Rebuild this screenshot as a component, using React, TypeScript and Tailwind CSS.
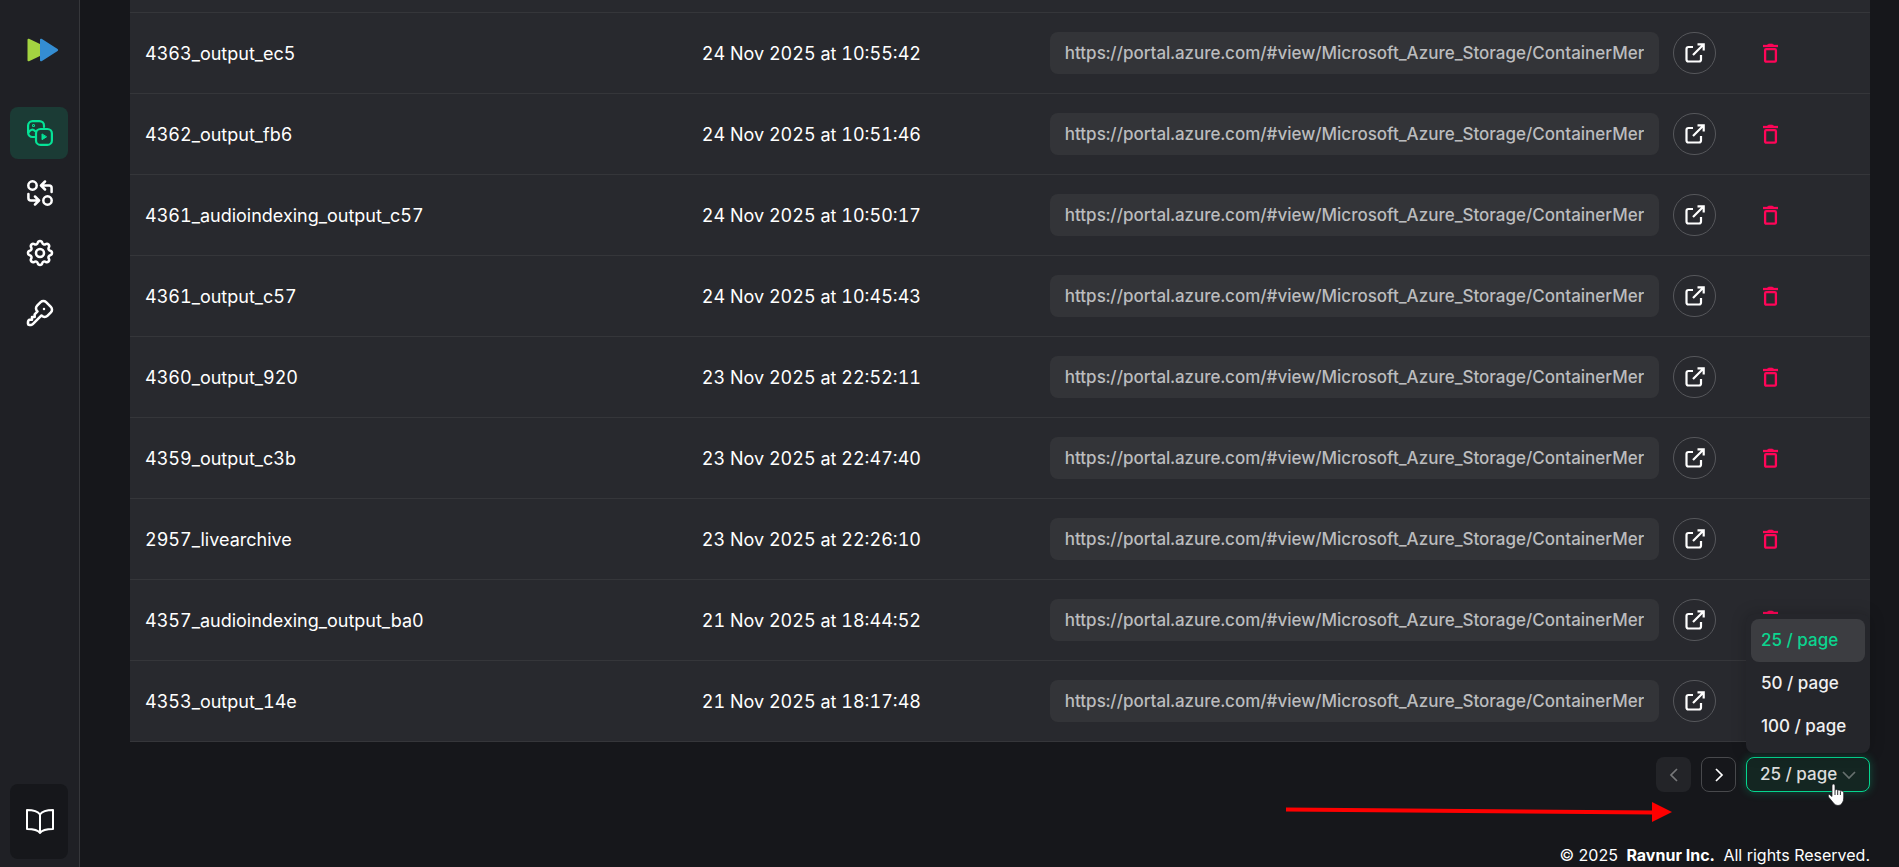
import React, { useState } from 'react';
import { TbKey, TbSettings } from 'react-icons/tb';

interface Asset {
    name: string;
    created: string;
}

const STORAGE_URL = 'https://portal.azure.com/#view/Microsoft_Azure_Storage/ContainerMer';

const ASSETS: Asset[] = [
    { name: '4363_output_ec5', created: '24 Nov 2025 at 10:55:42' },
    { name: '4362_output_fb6', created: '24 Nov 2025 at 10:51:46' },
    { name: '4361_audioindexing_output_c57', created: '24 Nov 2025 at 10:50:17' },
    { name: '4361_output_c57', created: '24 Nov 2025 at 10:45:43' },
    { name: '4360_output_920', created: '23 Nov 2025 at 22:52:11' },
    { name: '4359_output_c3b', created: '23 Nov 2025 at 22:47:40' },
    { name: '2957_livearchive', created: '23 Nov 2025 at 22:26:10' },
    { name: '4357_audioindexing_output_ba0', created: '21 Nov 2025 at 18:44:52' },
    { name: '4353_output_14e', created: '21 Nov 2025 at 18:17:48' },
];

const PAGE_SIZES = [25, 50, 100];

const Logo = () => (
    <svg width="32" height="24" viewBox="0 0 32 24" aria-hidden="true">
        <path d="M2 .8 14 6.500v11L2 23.200Q.5 23.600.5 22.200V1.800Q.5.4 2 .8z" fill="#a3d441" />
        <path d="M14.600.8 30.600 11q1.200 1 0 2L14.600 23.200q-1.600.6-1.600-1V1.800q0-1.600 1.600-1z" fill="#348dd2" />
    </svg>
);

const AssetsIcon = () => (
    <svg width="26" height="26" viewBox="0 0 26 26" fill="none" stroke="currentColor" strokeWidth="2.200" strokeLinecap="round" strokeLinejoin="round" aria-hidden="true">
        <path d="M7.500 17H5.500A4.500 4.500 0 0 1 1.100 12.500V5.500A4.500 4.500 0 0 1 5.500 1.100h7A4.500 4.500 0 0 1 17 5.500V7" />
        <path d="M1.500 12.500c2-3.300 4.500-3.600 6.500-1.500" />
        <circle cx="6.500" cy="5.500" r=".5" />
        <rect x="9" y="9" width="15.900" height="15.900" rx="4.500" />
        <path d="M15 14.300v5.400l4.300-2.700z" fill="currentColor" strokeWidth="1" />
    </svg>
);

const JobsIcon = () => (
    <svg width="26" height="26" viewBox="0 0 26 26" fill="none" stroke="currentColor" strokeWidth="2.500" strokeLinecap="round" strokeLinejoin="round" aria-hidden="true">
        <circle cx="5.500" cy="5.500" r="4.200" />
        <circle cx="20.500" cy="20.500" r="4.200" />
        <path d="M24.600 12V8q0-2.500-2.500-2.500H14.500M18 1.500l-4 4 4 4" />
        <path d="M1.400 14v4q0 2.500 2.500 2.500H11.500M8 16.500l4 4-4 4" />
    </svg>
);

const BookIcon = () => (
    <svg width="28" height="25" viewBox="0 0 28 25" fill="none" stroke="currentColor" strokeWidth="2" strokeLinejoin="round" aria-hidden="true">
        <path d="M14 5.500C12 2.500 7.500 1 1 1v19c6.500 0 11 1 13 4 2-3 6.500-4 13-4V1C20.500 1 16 2.500 14 5.500zM14 5.500V24" />
    </svg>
);

const OpenIcon = () => (
    <svg width="20" height="20" viewBox="0 0 20 20" fill="none" stroke="currentColor" strokeWidth="2.200" aria-hidden="true">
        <path d="M8 4H3.500Q1.500 4 1.500 6v10.500q0 2 2 2H14q2 0 2-2V12" />
        <path d="M8 12 18.500 1.500M12.500 1.300h6.200v6.200" />
    </svg>
);

const TrashIcon = () => (
    <svg width="15" height="20" viewBox="0 0 15 20" fill="none" stroke="currentColor" strokeWidth="2.300" aria-hidden="true">
        <path d="M0 3h15" />
        <path d="M4.500 2 5.500 1h4l1 1z" fill="currentColor" strokeWidth=".6" />
        <rect x="2.100" y="6.200" width="10.800" height="12.500" rx="1" />
    </svg>
);

const Chevron = ({ d, className }: { d: string; className?: string }) => (
    <svg width="14" height="14" viewBox="0 0 14 14" fill="none" stroke="currentColor" strokeWidth="1.700" className={className} aria-hidden="true">
        <path d={d} />
    </svg>
);

const NAV_ITEMS = [
    { label: 'Assets', icon: <AssetsIcon />, active: true },
    { label: 'Jobs', icon: <JobsIcon />, active: false },
    { label: 'Settings', icon: <TbSettings size={32} strokeWidth={1.9} />, active: false },
    { label: 'Keys', icon: <TbKey size={32} strokeWidth={1.9} />, active: false },
];

const Sidebar = () => (
    <aside className="flex w-20 shrink-0 flex-col items-start border-r border-[#36373b] bg-[#1f2025] pt-[38px] pb-2 pl-2.5">
        <a href="#home" aria-label="Home" className="pl-[17px]">
            <Logo />
        </a>
        <nav className="mt-[45px] flex flex-col gap-2">
            {NAV_ITEMS.map(item => (
                <a
                    key={item.label}
                    href={`#${item.label.toLowerCase()}`}
                    aria-label={item.label}
                    className={`flex h-13 w-[58px] items-center justify-center rounded-lg pl-0.5 ${item.active ? 'bg-[#1b3b35] text-[#05e397]' : 'text-white'}`}
                >
                    {item.icon}
                </a>
            ))}
        </nav>
        <a href="#docs" aria-label="Documentation" className="mt-auto flex h-[75px] w-[58px] items-center justify-center rounded-lg bg-[#16171b] pl-0.5 text-white">
            <BookIcon />
        </a>
    </aside>
);

const AssetRow = ({ asset }: { asset: Asset }) => (
    <tr className="h-[81px] border-t border-[#35363a]">
        <td className="px-[15px] pt-0.5">{asset.name}</td>
        <td className="px-[15px] pt-0.5">{asset.created}</td>
        <td className="pr-4 pl-[15px]">
            <div className="flex items-center gap-3.5">
                <input
                    readOnly
                    value={STORAGE_URL}
                    aria-label={`Storage URL of ${asset.name}`}
                    className="h-[42px] min-w-0 flex-1 rounded-lg bg-[#333438] px-[15px] text-[17px] font-medium text-[#bbbcbe] outline-none"
                />
                <button aria-label={`Open ${asset.name}`} className="flex h-[42px] w-[43px] items-center justify-center rounded-full border border-[#56575b]">
                    <OpenIcon />
                </button>
            </div>
        </td>
        <td className="px-4">
            <button aria-label={`Delete ${asset.name}`} className="flex h-10 w-11 items-center justify-center text-[#ff0558]">
                <TrashIcon />
            </button>
        </td>
    </tr>
);

const PageSizeSelect = () => {
    const [pageSize, setPageSize] = useState(25);

    return (
        <div className="relative text-[17px] font-medium">
            <select
                value={pageSize}
                onChange={e => setPageSize(Number(e.target.value))}
                aria-label="Page size"
                className="block h-[35px] w-31 appearance-none rounded-lg border border-[#05d68f] bg-[#142622] pl-[13px] text-[#dcdddd] shadow-[0_0_10px_rgba(5,214,143,0.3)] outline-none"
            >
                {PAGE_SIZES.map(size => (
                    <option key={size} value={size}>{size} / page</option>
                ))}
            </select>
            <Chevron d="M1 4l6 6 6-6" className="pointer-events-none absolute top-[11px] right-3.5 text-[#66706e]" />

            <div role="listbox" aria-label="Page size" className="absolute right-0 bottom-[39px] w-31 rounded-lg bg-[#25262b] p-[5px] shadow-[0_0_16px_rgba(0,0,0,0.2)]">
                {PAGE_SIZES.map(size => (
                    <button
                        key={size}
                        role="option"
                        aria-selected={size === pageSize}
                        onClick={() => setPageSize(size)}
                        className={`block h-[43px] w-full rounded-lg pl-2.5 text-left ${size === pageSize ? 'bg-[#3c3d41] text-[#0bd58f]' : 'text-[#f0f0f1]'}`}
                    >
                        {size} / page
                    </button>
                ))}
            </div>

            {/* Hand pointer over the open select */}
            <svg width="18" height="24" viewBox="0 0 18 24" className="pointer-events-none absolute top-[26px] right-[25px]" aria-hidden="true">
                <path
                    d="M5 2Q6.500 0 8 2v5q1.500-1 2.700.300 1.500-1 2.600.500 3-.500 3.400 1.900V15q0 3-1.500 5Q14 22.500 11 22.500T6.500 20L1.500 14Q.5 12 2.500 11.500L5 13.500z"
                    fill="#fff"
                    stroke="#17181c"
                    strokeWidth=".7"
                />
                <path d="M8 7v5M10.700 7.500V12M13.400 8.500v3.500" stroke="#17181c" strokeWidth=".9" />
            </svg>
        </div>
    );
};

export default function App() {
    return (
        <div className="flex min-h-screen bg-[#16171b] font-['Inter','Liberation_Sans',sans-serif] text-white">
            <Sidebar />
            <main className="flex min-w-0 flex-1 flex-col pr-[29px] pl-[50px]">
                <div className="bg-[#28292e] pt-3">
                    <table className="w-full table-fixed border-collapse border-b border-[#35363a] text-lg tabular-nums">
                        <colgroup>
                            <col className="w-[32%]" />
                            <col className="w-[20%]" />
                            <col />
                            <col className="w-[138px]" />
                        </colgroup>
                        <tbody>
                            {ASSETS.map(asset => (
                                <AssetRow key={asset.name} asset={asset} />
                            ))}
                        </tbody>
                    </table>
                </div>

                <div className="mt-[15px] flex justify-end gap-2.5">
                    <button disabled aria-label="Previous page" className="flex size-[35px] items-center justify-center rounded-lg bg-[#232428] text-[#77787a]">
                        <Chevron d="M10 1L4 7l6 6" />
                    </button>
                    <button aria-label="Next page" className="flex size-[35px] items-center justify-center rounded-lg border border-[#48494c]">
                        <Chevron d="M4 1l6 6-6 6" />
                    </button>
                    <PageSizeSelect />
                </div>

                <div className="mt-[9px] flex justify-end pr-[198px]">
                    <svg width="386" height="22" viewBox="0 0 386 22" aria-hidden="true">
                        <path d="M0 8.500 368 11.500" stroke="#fe0000" strokeWidth="4" />
                        <path d="M366 1v20l20-10z" fill="#fe0000" />
                    </svg>
                </div>

                <footer className="mt-auto text-right text-base">
                    © 2025 <strong className="mx-1 font-bold">Ravnur Inc.</strong> All rights Reserved.
                </footer>
            </main>
        </div>
    );
}
